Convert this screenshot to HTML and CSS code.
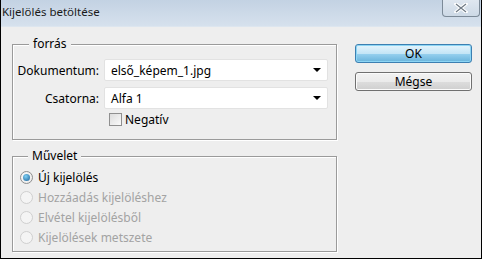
FILE: index.html
```html
<!DOCTYPE html>
<html lang="hu">
<head>
  <meta charset="UTF-8" />
  <title>Kijelölés betöltése</title>
  <link rel="stylesheet" href="styles.css">
</head>
<body>
  <div class="window">
    <div class="titlebar">
      <span class="title">Kijelölés betöltése</span>
      <span class="close">
        <svg width="14" height="10" viewBox="0 0 14 10">
          <path d="M2 1 L12 9 M12 1 L2 9" stroke="#fff" stroke-width="3.4" stroke-linecap="square"/>
          <path d="M2 1 L12 9 M12 1 L2 9" stroke="#6f7a86" stroke-width="1.2"/>
        </svg>
      </span>
    </div>

    <div class="content">
      <div class="left">
        <div class="group source">
          <div class="group-title">forrás</div>
          <div class="row first">
            <label class="lbl">Dokumentum:</label>
            <div class="select"><span>első_képem_1.jpg</span><i class="arrow"></i></div>
          </div>
          <div class="row">
            <label class="lbl">Csatorna:</label>
            <div class="select"><span>Alfa 1</span><i class="arrow"></i></div>
          </div>
          <div class="check-row">
            <span class="checkbox"></span>
            <span>Negatív</span>
          </div>
        </div>

        <div class="group operation">
          <div class="group-title">Művelet</div>
          <div class="radio-row first"><span class="radio checked"></span><span>Új kijelölés</span></div>
          <div class="radio-row disabled"><span class="radio"></span><span>Hozzáadás kijelöléshez</span></div>
          <div class="radio-row disabled"><span class="radio"></span><span>Elvétel kijelölésből</span></div>
          <div class="radio-row disabled"><span class="radio"></span><span>Kijelölések metszete</span></div>
        </div>
      </div>

      <div class="buttons">
        <button class="btn primary">OK</button>
        <button class="btn">Mégse</button>
      </div>
    </div>
  </div>
</body>
</html>
```

FILE: styles.css
```css
body {
  margin: 0;
  background-color: #000;
  font-family: "Noto Sans", "Open Sans", sans-serif;
  font-size: 12px;
  color: #000;
}
.window {
  width: 480px;
  height: 258px;
  border: 1px solid #000;
  border-top: none;
  background-color: #eeeeee;
}
.titlebar {
  height: 27px;
  display: flex;
  justify-content: space-between;
  align-items: flex-start;
  background: linear-gradient(to bottom, #c3d2e3, #d6e1ed);
  border-bottom: 1px solid #dde6ef;
  box-sizing: border-box;
}
.title {
  padding: 4px 0 0 1px;
  font-size: 11.5px;
  color: #1a1a1a;
}
.close {
  width: 36px;
  height: 16px;
  margin-right: 1px;
  border: 1px solid #7c8a98;
  border-top: none;
  border-radius: 0 0 4px 4px;
  background: linear-gradient(to bottom, #dfe7f0, #cdd9e6);
  display: flex;
  align-items: center;
  justify-content: center;
}
.content {
  display: flex;
  padding: 17px 0 0 11px;
}
.left {
  width: 325px;
}
.group {
  box-sizing: border-box;
  height: 96px;
  border: 1px solid #9a9a9a;
  box-shadow: 1px 1px 0 #fff, inset 1px 1px 0 #fff;
}
.group-title {
  width: fit-content;
  margin: -8px 0 0 16px;
  padding: 0 4px;
  line-height: 14px;
  background-color: #eeeeee;
}
.operation .group-title {
  margin-left: 15px;
}
.row {
  display: flex;
  align-items: center;
  height: 22px;
  margin-top: 6px;
}
.row.first {
  margin-top: 8px;
}
.lbl {
  width: 86px;
  text-align: right;
  padding-right: 5px;
}
.select {
  width: 224px;
  height: 22px;
  box-sizing: border-box;
  border: 1px solid #e2e2e2;
  border-radius: 2px;
  background-color: #fff;
  display: flex;
  align-items: center;
  justify-content: space-between;
  padding: 0 6px 0 6px;
}
.arrow {
  width: 0;
  height: 0;
  border-left: 4px solid transparent;
  border-right: 4px solid transparent;
  border-top: 4px solid #000;
}
.check-row {
  display: flex;
  align-items: center;
  height: 13px;
  margin-top: 4px;
  padding-left: 96px;
}
.checkbox {
  width: 11px;
  height: 11px;
  border: 1px solid #8f8f8f;
  background: linear-gradient(135deg, #dcdcdc, #fafafa);
  margin-right: 3px;
}
.operation {
  margin-top: 16px;
}
.radio-row {
  display: flex;
  align-items: center;
  height: 20px;
  padding-left: 7px;
}
.radio-row.first {
  margin-top: 4px;
}
.radio {
  width: 11px;
  height: 11px;
  border: 1px solid #8e8f8f;
  border-radius: 50%;
  background: radial-gradient(circle at 40% 40%, #fff, #e4e4e4);
  margin-right: 5px;
  position: relative;
}
.radio.checked::after {
  content: "";
  position: absolute;
  left: 2px;
  top: 2px;
  width: 7px;
  height: 7px;
  border-radius: 50%;
  background: radial-gradient(circle at 40% 35%, #7fd0f5, #1a5f96);
}
.disabled {
  color: #a3a3a3;
}
.disabled .radio {
  border-color: #cfcfcf;
  background: #f4f4f4;
}
.buttons {
  display: flex;
  flex-direction: column;
  gap: 9px;
  margin-left: 18px;
}
.btn {
  width: 117px;
  height: 19px;
  padding: 0;
  font-family: inherit;
  font-size: 12px;
  border: 1px solid #707070;
  border-radius: 3px;
  background: linear-gradient(to bottom, #f2f2f2 0%, #ebebeb 50%, #dddddd 51%, #cfcfcf 100%);
  box-shadow: inset 0 0 0 1px #fbfbfb;
}
.btn.primary {
  border-color: #3c7fb1;
  background: linear-gradient(to bottom, #e5f4fc 0%, #c4e5f6 50%, #98d1ef 51%, #68b3db 100%);
  box-shadow: inset 0 0 0 1px #8cd5f4;
}
```
